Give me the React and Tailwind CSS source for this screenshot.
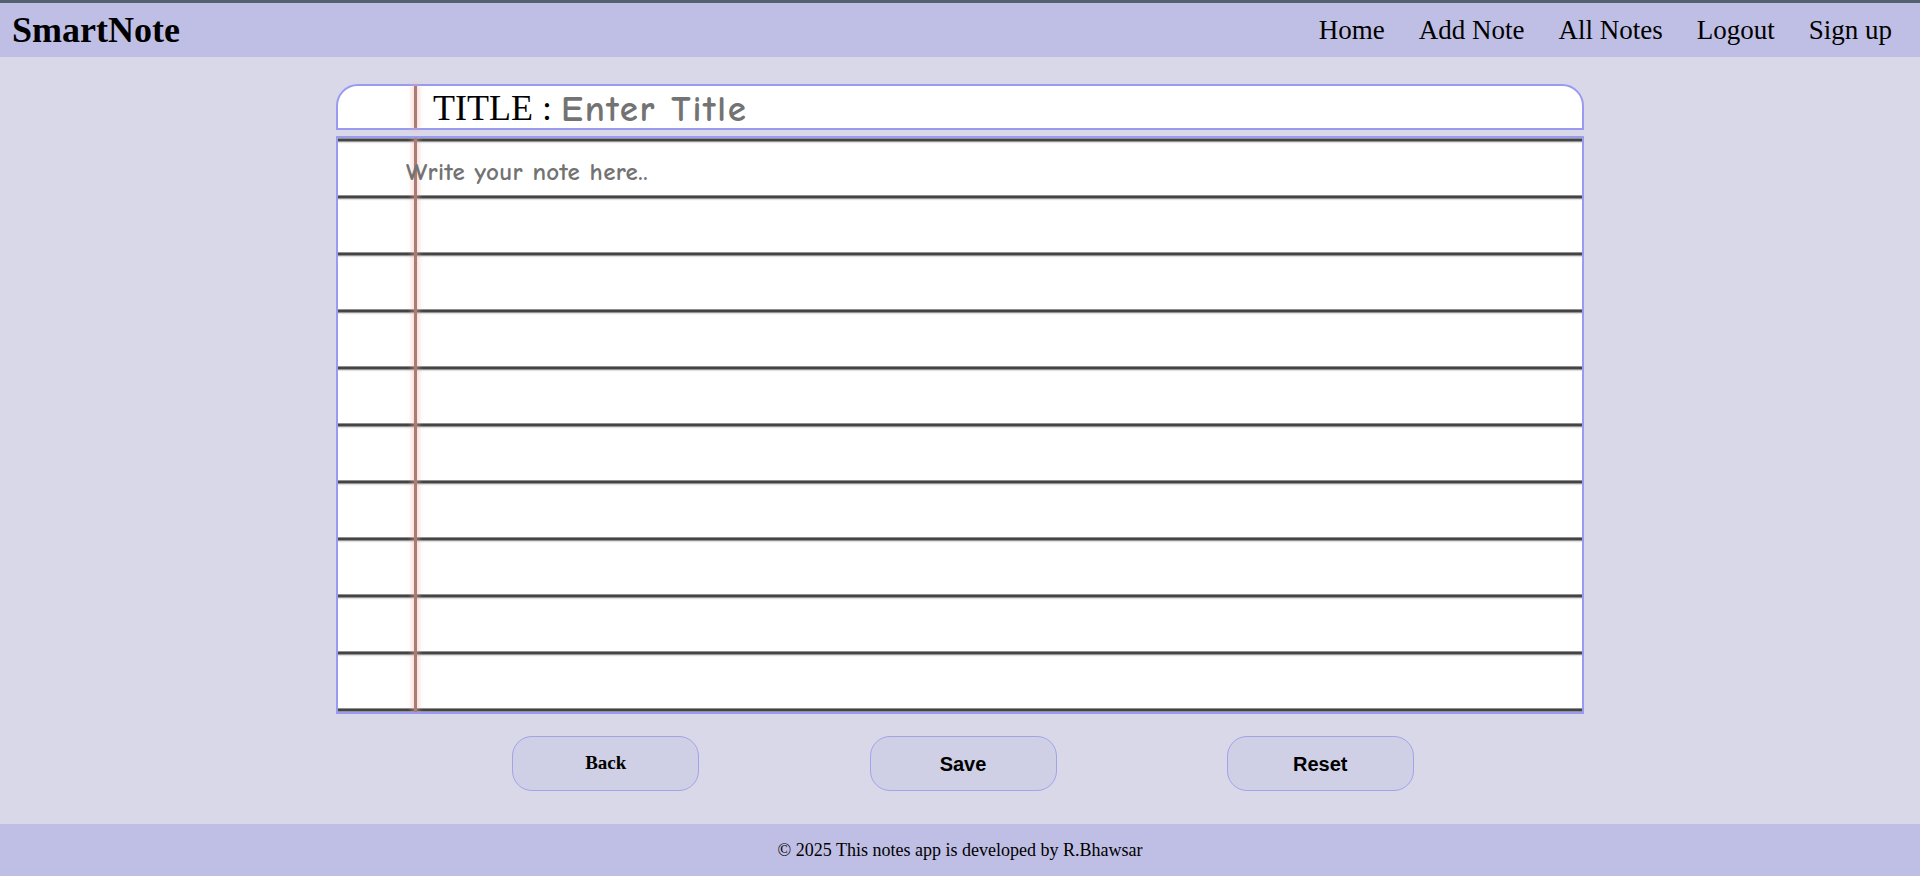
import React, { useState } from 'react';

const serif = "font-['Liberation_Serif','Times_New_Roman',serif]";
const comic = "font-['Comic_Sans_MS','Comic_Neue','DejaVu_Sans',cursive]";

const navLinks = ['Home', 'Add Note', 'All Notes', 'Logout', 'Sign up'];

const MarginLine = () => (
  <div className="pointer-events-none absolute top-0 bottom-0 left-[76px] w-[3px] bg-[#a97d75] shadow-[0_0_5px_2px_rgba(235,170,165,0.45)]" />
);

const App = () => {
  const [title, setTitle] = useState('');
  const [note, setNote] = useState('');

  return (
    <div className={`flex min-h-[876px] flex-col bg-[#d9d8e8] ${serif}`}>
      {/* Navbar */}
      <nav className="flex h-[57px] items-center justify-between border-t-[3px] border-[#556171] bg-[#bfbee4] pr-[28px] pl-[12px]">
        <div className="text-[36px] font-bold leading-none text-black">SmartNote</div>
        <ul className="flex items-center gap-[34px]">
          {navLinks.map((l) => (
            <li key={l} className="cursor-pointer text-[27px] leading-none text-black">
              {l}
            </li>
          ))}
        </ul>
      </nav>

      {/* Note paper */}
      <main className="flex flex-1 flex-col items-center pt-[27px]">
        <div className="w-[65%]">
          <div className="relative flex h-[46px] items-end rounded-t-[22px] border-2 border-[#9a9af0] bg-white">
            <MarginLine />
            <label className="pb-[2px] pl-[95px] text-[36px] leading-[36px] whitespace-nowrap text-black">
              TITLE :&nbsp;
            </label>
            <input
              value={title}
              onChange={(e) => setTitle(e.target.value)}
              placeholder="Enter Title"
              className={`h-full flex-1 bg-transparent pt-[4px] text-[37px] font-bold tracking-[1.8px] text-black outline-none placeholder:text-[#737373] ${comic}`}
            />
          </div>

          <div className="relative mt-[6px] h-[578px] overflow-hidden border-2 border-[#9a9af0] bg-white bg-[image:repeating-linear-gradient(to_bottom,#c8c8c8_0px,#555_1px,#333_2px,#555_3px,#cfcfcf_4px,#f4f4f4_5px,#fff_6px,#fff_57px)]">
            <MarginLine />
            <textarea
              value={note}
              onChange={(e) => setNote(e.target.value)}
              placeholder="Write your note here.."
              className={`relative h-full w-full resize-none bg-transparent pt-[5px] pl-[68px] text-[25px] font-bold tracking-[0.4px] leading-[57px] text-black outline-none placeholder:text-[#737373] ${comic}`}
            />
          </div>

          <div className="mt-[22px] flex justify-evenly pl-[6px]">
            <button className="h-[55px] w-[187px] rounded-[20px] border border-[#a3a3ea] bg-[#cfcfe6] text-[19px] font-bold text-black">
              Back
            </button>
            <button className="h-[55px] w-[187px] rounded-[20px] border border-[#a3a3ea] bg-[#cfcfe6] font-['Liberation_Sans',Arial,sans-serif] text-[20px] font-bold text-black">
              Save
            </button>
            <button className="h-[55px] w-[187px] rounded-[20px] border border-[#a3a3ea] bg-[#cfcfe6] font-['Liberation_Sans',Arial,sans-serif] text-[20px] font-bold text-black">
              Reset
            </button>
          </div>
        </div>
      </main>

      {/* Footer */}
      <footer className="mt-[33px] flex h-[52px] items-center justify-center bg-[#bfbee4] text-[18px] text-black">
        © 2025 This notes app is developed by R.Bhawsar
      </footer>
    </div>
  );
};

export default App;
